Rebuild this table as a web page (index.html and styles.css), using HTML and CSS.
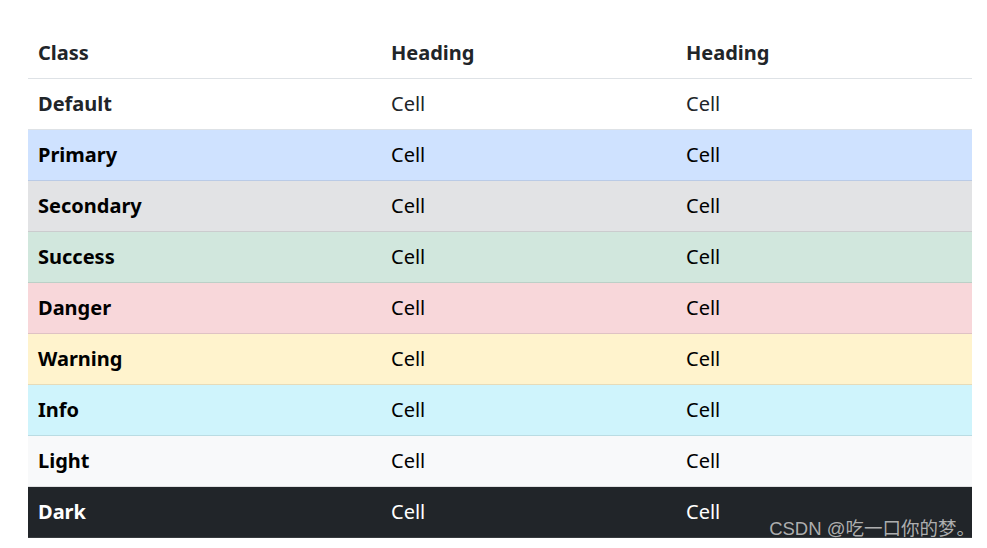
FILE: index.html
```html
<!DOCTYPE html>
<html lang="zh">
<head>
<meta charset="utf-8">
<title>Table variants</title>
<link rel="stylesheet" href="styles.css">
</head>
<body>
<div class="page">
  <table class="table">
    <colgroup>
      <col class="c1"><col class="c2"><col class="c3">
    </colgroup>
    <thead>
      <tr><th>Class</th><th>Heading</th><th>Heading</th></tr>
    </thead>
    <tbody>
      <tr><th>Default</th><td>Cell</td><td>Cell</td></tr>
      <tr class="v-primary"><th>Primary</th><td>Cell</td><td>Cell</td></tr>
      <tr class="v-secondary"><th>Secondary</th><td>Cell</td><td>Cell</td></tr>
      <tr class="v-success"><th>Success</th><td>Cell</td><td>Cell</td></tr>
      <tr class="v-danger"><th>Danger</th><td>Cell</td><td>Cell</td></tr>
      <tr class="v-warning"><th>Warning</th><td>Cell</td><td>Cell</td></tr>
      <tr class="v-info"><th>Info</th><td>Cell</td><td>Cell</td></tr>
      <tr class="v-light"><th>Light</th><td>Cell</td><td>Cell</td></tr>
      <tr class="v-dark"><th>Dark</th><td>Cell</td><td>Cell</td></tr>
    </tbody>
  </table>
  <div class="watermark">CSDN @吃一口你的梦。</div>
</div>
</body>
</html>
```
FILE: styles.css
```css
html, body {
  margin: 0;
  padding: 0;
  background: #fff;
}
body {
  font-family: "Noto Sans", "Open Sans", sans-serif;
  font-size: 20px;
  line-height: 1.5;
  color: #212529;
}
.page {
  position: relative;
  padding: 28px 15px 10px 28px;
}
.table {
  width: 944px;
  border-collapse: collapse;
  table-layout: fixed;
}
.c1 { width: 353px; }
.c2 { width: 295px; }
.c3 { width: 296px; }
.table th, .table td {
  padding: 10px 10px;
  text-align: left;
  border-bottom: 1px solid #dee2e6;
  white-space: nowrap;
}
.table th { font-weight: 700; }
.table td { font-weight: 400; }

.v-primary { background: #cfe2ff; color: #000; }
.v-primary th, .v-primary td { border-bottom-color: #bacbe6; }
.v-secondary { background: #e2e3e5; color: #000; }
.v-secondary th, .v-secondary td { border-bottom-color: #cbccce; }
.v-success { background: #d1e7dd; color: #000; }
.v-success th, .v-success td { border-bottom-color: #bcd0c7; }
.v-danger { background: #f8d7da; color: #000; }
.v-danger th, .v-danger td { border-bottom-color: #dfc2c4; }
.v-warning { background: #fff3cd; color: #000; }
.v-warning th, .v-warning td { border-bottom-color: #e6dbb9; }
.v-info { background: #cff4fc; color: #000; }
.v-info th, .v-info td { border-bottom-color: #badce3; }
.v-light { background: #f8f9fa; color: #000; }
.v-light th, .v-light td { border-bottom-color: #dfe0e1; }
.v-dark { background: #212529; color: #fff; }
.v-dark th, .v-dark td { border-bottom-color: #373b3e; }

.watermark {
  position: absolute;
  right: 12px;
  bottom: 8px;
  font-family: "Liberation Sans", "Noto Sans CJK SC", sans-serif;
  font-size: 18.5px;
  line-height: 22px;
  color: rgba(200, 200, 200, 0.85);
  white-space: nowrap;
}
```
